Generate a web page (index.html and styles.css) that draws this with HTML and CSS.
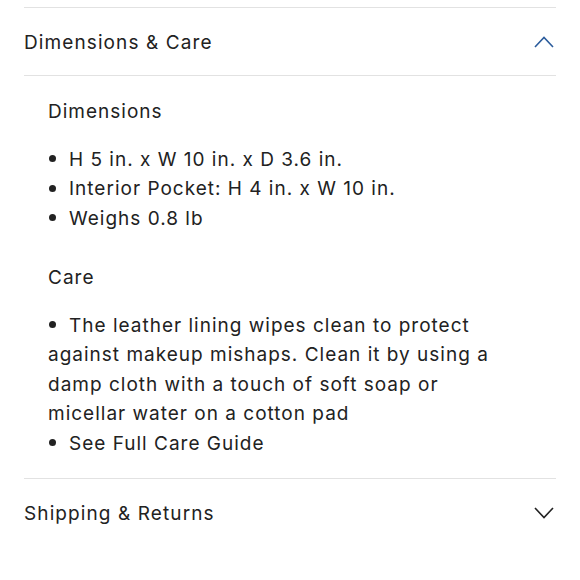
FILE: index.html
```html
<!DOCTYPE html>
<html lang="en">
<head>
<meta charset="utf-8">
<link rel="stylesheet" href="styles.css">
</head>
<body>
<div class="accordion">
  <section class="item open">
    <div class="header">
      <span class="title">Dimensions &amp; Care</span>
      <svg class="chev up" width="20" height="12" viewBox="0 0 20 12"><path d="M1 11 L10 1.5 L19 11" fill="none" stroke="currentColor" stroke-width="1.6"/></svg>
    </div>
    <div class="panel">
      <h3 class="sub">Dimensions</h3>
      <ul class="list">
        <li>H 5 in. x W 10 in. x D 3.6 in.</li>
        <li>Interior Pocket: H 4 in. x W 10 in.</li>
        <li>Weighs 0.8 lb</li>
      </ul>
      <h3 class="sub care">Care</h3>
      <ul class="list">
        <li>The leather lining wipes clean to protect against makeup mishaps. Clean it by using a damp cloth with a touch of soft soap or micellar water on a cotton pad</li>
        <li>See Full Care Guide</li>
      </ul>
    </div>
  </section>
  <section class="item">
    <div class="header">
      <span class="title">Shipping &amp; Returns</span>
      <svg class="chev down" width="20" height="12" viewBox="0 0 20 12"><path d="M1 1 L10 10.5 L19 1" fill="none" stroke="currentColor" stroke-width="1.6"/></svg>
    </div>
  </section>
</div>
</body>
</html>
```
FILE: styles.css
```css
html, body {
  margin: 0;
  padding: 0;
  background: #fff;
}
body {
  font-family: Inter, "Noto Sans", sans-serif;
  color: #222;
  font-size: 19px;
}
.accordion {
  padding: 7px 24px 0;
}
.item {
  border-top: 1px solid #e2e2e2;
}
.header {
  height: 65px;
  padding-top: 2px;
  display: flex;
  align-items: center;
  justify-content: space-between;
  border-bottom: 1px solid #e2e2e2;
}
.item:not(.open) .header {
  border-bottom: none;
}
.item.open + .item {
  border-top: none;
}
.title {
  font-size: 19px;
  letter-spacing: 1.1px;
}
.chev {
  margin-right: 2px;
  margin-top: -2px;
  display: block;
}
.chev.up { color: #2b5c9c; }
.chev.down { color: #222; }
.panel {
  padding: 21px 41px 20px 24px;
  border-bottom: 1px solid #e2e2e2;
  line-height: 29.5px;
  letter-spacing: 1px;
}
.sub {
  margin: 0 0 18px;
  font-size: 19px;
  font-weight: normal;
}
.sub.care {
  margin-top: 30px;
}
.list {
  margin: 0;
  padding: 0;
  list-style: none;
}
.list li::before {
  content: "";
  display: inline-block;
  width: 7px;
  height: 7px;
  border-radius: 50%;
  background: #222;
  vertical-align: middle;
  margin: -3px 13px 0 1px;
}
```
